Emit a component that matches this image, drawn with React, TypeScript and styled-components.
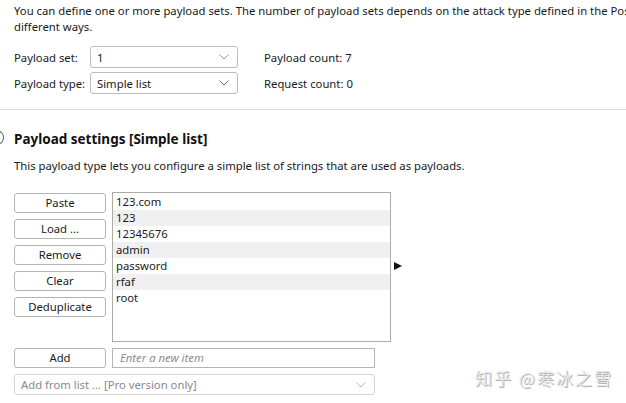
import React from 'react';
import styled, { createGlobalStyle } from 'styled-components';

const GlobalStyle = createGlobalStyle`
  html, body {
    margin: 0;
    padding: 0;
    background: #ffffff;
  }
  body {
    font-family: "Noto Sans", "Open Sans", "Noto Sans CJK SC", sans-serif;
    font-size: 11.3px;
    color: #1a1a1a;
  }
`;

const Page = styled.div`
  width: 626px;
  height: 403px;
  overflow: hidden;
  position: relative;
  background: #fff;
`;

const Section = styled.div`
  padding: 0 14px;
`;

const Intro = styled.p`
  margin: 0;
  padding-top: 3px;
  line-height: 16px;
  white-space: nowrap;
`;

const FormGrid = styled.div`
  display: grid;
  grid-template-columns: 76px 148px 26px auto;
  grid-auto-rows: 22px;
  row-gap: 4px;
  align-items: center;
  margin-top: 11px;
`;

const Label = styled.span`
  white-space: nowrap;
`;

const Stat = styled.span`
  grid-column: 4;
  white-space: nowrap;
`;

const SelectBox = styled.div<{ $disabled?: boolean; $width?: number }>`
  display: flex;
  align-items: center;
  justify-content: space-between;
  box-sizing: border-box;
  height: ${({ $disabled }) => ($disabled ? 21 : 22)}px;
  width: ${({ $width }) => ($width ? `${$width}px` : '100%')};
  padding: 0 8px 0 6px;
  border: 1px solid ${({ $disabled }) => ($disabled ? '#d6d6d6' : '#bcbcbc')};
  border-radius: 3px;
  background: #fff;
  color: ${({ $disabled }) => ($disabled ? '#8a8a8a' : '#1a1a1a')};
`;

const Chevron = ({ color = '#777' }: { color?: string }) => (
  <svg width="10" height="6" viewBox="0 0 10 6">
    <path d="M0.5 0.5 L5 5 L9.5 0.5" fill="none" stroke={color} strokeWidth="1" />
  </svg>
);

const Divider = styled.hr`
  margin: 15px 0 0;
  border: 0;
  border-top: 1px solid #dcdcdc;
`;

const HeadingRow = styled.div`
  position: relative;
  padding: 20px 14px 0;
  display: flex;
  align-items: center;
`;

const Heading = styled.h2`
  margin: 0;
  font-size: 13.5px;
  font-weight: 700;
  line-height: 18px;
  color: #111;
`;

const CollapseMarker = styled.span`
  position: absolute;
  left: -6px;
  top: 21px;
  width: 10px;
  height: 13px;
  border: 1.5px solid #555;
  border-radius: 50%;
  box-sizing: border-box;
`;

const Description = styled.p`
  margin: 10px 0 0;
  padding: 0 14px;
  line-height: 15px;
`;

const ListArea = styled.div`
  display: grid;
  grid-template-columns: 92px 279px auto;
  column-gap: 6px;
  padding: 0 14px;
  margin-top: 19px;
  align-items: start;
`;

const ButtonColumn = styled.div`
  display: flex;
  flex-direction: column;
  gap: 6px;
  padding-top: 1px;
`;

const Button = styled.button`
  box-sizing: border-box;
  height: 20px;
  width: 92px;
  padding: 0;
  font-family: inherit;
  font-size: 11.3px;
  color: #1a1a1a;
  background: #fff;
  border: 1px solid #b4b4b4;
  border-radius: 3px;
  line-height: 18px;
`;

const ListBox = styled.ul`
  box-sizing: border-box;
  margin: 0;
  padding: 1px 0 0;
  list-style: none;
  height: 150px;
  border: 1px solid #ababab;
  background: #fff;
`;

const ListItem = styled.li<{ $striped: boolean }>`
  height: 16px;
  line-height: 16px;
  padding-left: 3px;
  background: ${({ $striped }) => ($striped ? '#f0f0f0' : 'transparent')};
`;

const Arrow = styled.span`
  margin-top: 70px;
  margin-left: -3px;
  width: 0;
  height: 0;
  border-top: 4.5px solid transparent;
  border-bottom: 4.5px solid transparent;
  border-left: 8px solid #111;
`;

const AddRow = styled.div`
  display: flex;
  gap: 6px;
  padding: 0 14px;
  margin-top: 6px;
`;

const TextInput = styled.div`
  box-sizing: border-box;
  width: 263px;
  height: 20px;
  border: 1px solid #b4b4b4;
  padding: 0 7px;
  line-height: 18px;
  font-style: italic;
  color: #8c8c8c;
`;

const FromListRow = styled.div`
  padding: 0 14px;
  margin-top: 6px;
`;

const Watermark = styled.div`
  position: absolute;
  left: 475px;
  top: 367px;
  font-family: "Noto Sans CJK SC", sans-serif;
  font-size: 17px;
  line-height: 22px;
  color: #e6e6e6;
  text-shadow: 1px 1px 0 #b5b5b5;
  letter-spacing: 2px;
  white-space: nowrap;
`;

const payloads = ['123.com', '123', '12345676', 'admin', 'password', 'rfaf', 'root'];
const actions = ['Paste', 'Load ...', 'Remove', 'Clear', 'Deduplicate'];

export default function App() {
  return (
    <Page>
      <GlobalStyle />
      <Section>
        <Intro>
          You can define one or more payload sets. The number of payload sets depends on the attack type defined in the Positions tab.
          <br />
          different ways.
        </Intro>
        <FormGrid>
          <Label>Payload set:</Label>
          <SelectBox>
            <span>1</span>
            <Chevron color="#999" />
          </SelectBox>
          <Stat>Payload count: 7</Stat>
          <Label>Payload type:</Label>
          <SelectBox>
            <span>Simple list</span>
            <Chevron color="#666" />
          </SelectBox>
          <Stat>Request count: 0</Stat>
        </FormGrid>
      </Section>
      <Divider />
      <HeadingRow>
        <CollapseMarker />
        <Heading>Payload settings [Simple list]</Heading>
      </HeadingRow>
      <Description>This payload type lets you configure a simple list of strings that are used as payloads.</Description>
      <ListArea>
        <ButtonColumn>
          {actions.map((a) => (
            <Button key={a}>{a}</Button>
          ))}
        </ButtonColumn>
        <ListBox>
          {payloads.map((p, i) => (
            <ListItem key={p} $striped={i % 2 === 1}>
              {p}
            </ListItem>
          ))}
        </ListBox>
        <Arrow />
      </ListArea>
      <AddRow>
        <Button>Add</Button>
        <TextInput>Enter a new item</TextInput>
      </AddRow>
      <FromListRow>
        <SelectBox $disabled $width={361}>
          <span>Add from list ... [Pro version only]</span>
          <Chevron color="#bbb" />
        </SelectBox>
      </FromListRow>
      <Watermark>知乎 @寒冰之雪</Watermark>
    </Page>
  );
}
